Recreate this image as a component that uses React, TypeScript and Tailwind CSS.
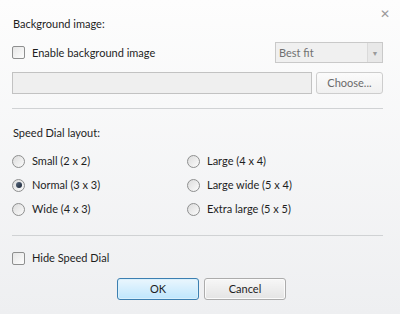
import React from "react";

const Checkbox = () => (
  <span className="box-border inline-block h-[13px] w-[13px] shrink-0 rounded-[2px] border border-[#8e8f8f] bg-gradient-to-br from-[#e6e6e6] to-[#fdfdfd]" />
);

const Radio = ({ checked }: { checked?: boolean }) => (
  <span className="box-border flex h-[13px] w-[13px] shrink-0 items-center justify-center rounded-full border border-[#8e8f8f] bg-gradient-to-br from-[#dcdcdc] to-[#fbfbfb]">
    {checked && (
      <span className="h-[6px] w-[6px] rounded-full bg-gradient-to-br from-[#5a6a80] to-[#1b2738]" />
    )}
  </span>
);

const RadioRow = ({ label, checked }: { label: string; checked?: boolean }) => (
  <div className="flex h-[24px] items-center gap-[7px]">
    <Radio checked={checked} />
    <span>{label}</span>
  </div>
);

export default function App() {
  return (
    <div
      className="relative box-border flex h-[314px] w-[400px] flex-col bg-gradient-to-b from-[#fdfdfd] to-[#eeeff1] pl-3 pr-[17px] text-[11px] leading-[16px] text-[#1e1e1e]"
      style={{ fontFamily: "Lato, 'Noto Sans', sans-serif" }}
    >
      <span className="absolute right-[10px] top-[8px] text-[12px] leading-[12px] text-[#9a9a9a]">
        ✕
      </span>

      <div className="mt-[16px] pl-px">Background image:</div>

      <div className="mt-[10px] flex h-[21px] items-center justify-between">
        <div className="flex items-center gap-[7px]">
          <Checkbox />
          <span>Enable background image</span>
        </div>
        <div className="box-border flex h-[21px] w-[108px] items-stretch border border-[#c9c9c9] bg-[#f0f0f0] text-[#707070]">
          <span className="flex flex-1 items-center pl-[3px]">Best fit</span>
          <span className="flex w-[15px] items-center justify-center border-l border-[#dadada] bg-[#e8e8e8] text-[7px] text-[#9a9a9a]">
            ▼
          </span>
        </div>
      </div>

      <div className="mt-[9px] flex h-[22px] gap-[4px]">
        <div className="box-border w-[300px] border border-[#c2c2c2] bg-[#efefef]" />
        <div className="box-border flex flex-1 items-center justify-center rounded-[3px] border border-[#cdcdcd] bg-gradient-to-b from-[#fbfbfb] to-[#f0f0f0] text-[#6a6a6a]">
          Choose...
        </div>
      </div>

      <div className="mt-[14px] h-px bg-[#d0d2d4]" />

      <div className="mt-[16px] pl-px">Speed Dial layout:</div>

      <div className="mt-[8px] grid grid-cols-[175px_1fr]">
        <div className="flex flex-col">
          <RadioRow label="Small (2 x 2)" />
          <RadioRow label="Normal (3 x 3)" checked />
          <RadioRow label="Wide (4 x 3)" />
        </div>
        <div className="flex flex-col">
          <RadioRow label="Large (4 x 4)" />
          <RadioRow label="Large wide (5 x 4)" />
          <RadioRow label="Extra large (5 x 5)" />
        </div>
      </div>

      <div className="mt-[14px] h-px bg-[#d0d2d4]" />

      <div className="mt-[14px] flex h-[16px] items-center gap-[7px]">
        <Checkbox />
        <span>Hide Speed Dial</span>
      </div>

      <div className="mt-[12px] flex justify-center gap-[5px] pl-[8px]">
        <div className="box-border flex h-[22px] w-[82px] items-center justify-center rounded-[3px] border border-[#3c7fb1] bg-gradient-to-b from-[#eaf6fd] to-[#bee6fd] shadow-[inset_0_0_0_1px_#d9f0fc]">
          OK
        </div>
        <div className="box-border flex h-[22px] w-[82px] items-center justify-center rounded-[3px] border border-[#acacac] bg-gradient-to-b from-[#f7f7f7] to-[#e4e4e4] shadow-[inset_0_0_0_1px_#fbfbfb]">
          Cancel
        </div>
      </div>
    </div>
  );
}
